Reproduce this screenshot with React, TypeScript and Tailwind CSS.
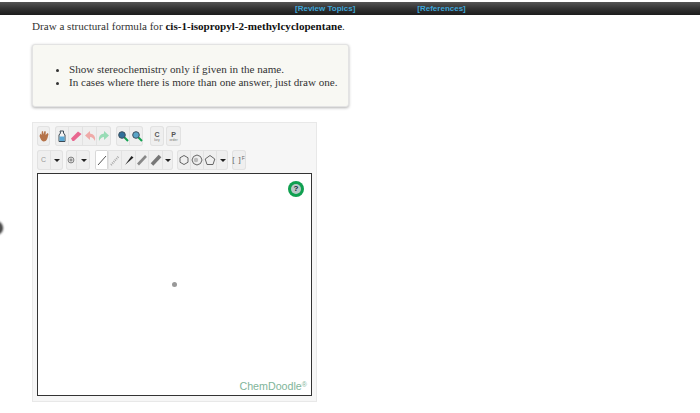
import React from "react";

const Seg = ({ w, active, children }: { w: string; active?: boolean; children?: React.ReactNode }) => (
  <div className={`${w} h-full flex items-center justify-center border-r border-[#e2e2e2] last:border-r-0 ${active ? "bg-white rounded-[2px] shadow-[inset_0_0_0_1px_#d8d8d8]" : ""}`}>
    {children}
  </div>
);

const Group = ({ className, children }: { className?: string; children: React.ReactNode }) => (
  <div className={`flex h-[20px] rounded-[3px] shadow-[inset_0_0_0_1px_#e2e2e2] bg-[#efefef] ${className ?? ""}`}>{children}</div>
);

const Caret = () => <div className="w-0 h-0 border-x-[3px] border-x-transparent border-t-[3px] border-t-[#222]" />;

const Icon = ({ children }: { children: React.ReactNode }) => (
  <svg width="12" height="12" viewBox="0 0 12 12">{children}</svg>
);

const Lens = ({ color }: { color: string }) => (
  <Icon>
    <line x1="7" y1="7" x2="11" y2="11" stroke="#12a150" strokeWidth="2" />
    <circle cx="5" cy="5" r="3.3" fill={color} stroke="#3d5060" strokeWidth="1" />
  </Icon>
);

const Label = ({ t, s }: { t: string; s: string }) => (
  <div className="flex flex-col items-center leading-none">
    <span className="text-[7px] font-bold text-[#555] leading-[7px]">{t}</span>
    <span className="text-[3.5px] text-[#777] leading-[4px]">{s}</span>
  </div>
);

export default function App() {
  return (
    <div className="relative w-[700px] h-[413px] bg-white overflow-hidden font-['Liberation_Serif',serif]">
      <div className="mt-[2px] h-[13px] pt-[1px] bg-gradient-to-b from-[#555] via-[#333] to-[#1c1c1c] flex items-center font-['Liberation_Sans',sans-serif] text-[8px] font-bold text-[#3ea6d8]">
        <span className="ml-[295px]">[Review Topics]</span>
        <span className="ml-[62px]">[References]</span>
      </div>

      <div className="ml-[32px]">
        <p className="mt-[4px] text-[11.1px] leading-[14px] text-[#333]">
          Draw a structural formula for <b className="text-[#111]">cis-1-isopropyl-2-methylcyclopentane</b>.
        </p>

        <div className="mt-[11px] w-[317px] h-[63px] rounded-[3px] border border-[#e3e3e3] bg-[#f8f8f3] shadow-[0_1px_3px_rgba(0,0,0,0.3)] flex items-center">
          <ul className="list-disc pl-[36px] text-[11.1px] leading-[13px] text-[#333]">
            <li>Show stereochemistry only if given in the name.</li>
            <li>In cases where there is more than one answer, just draw one.</li>
          </ul>
        </div>

        <div className="mt-[15px] w-[285px] h-[280px] border border-[#e8e8e8] bg-[#f6f6f6] pl-[4px] pt-[3px] font-['Liberation_Sans',sans-serif]">
          <div className="flex">
            <Group>
              <Seg w="w-[13px]">
                <Icon><path d="M1.5 6 L2.5 3.5 L3.5 5 L3.8 1.5 L5 1 L5.5 4.5 L6.5 1 L7.8 1.5 L7.6 5 L9.5 3 L10.5 4 L9.5 8 Q8.5 11.5 5.5 11.5 Q3 11 1.5 6Z" fill="#b5734a" /></Icon>
              </Seg>
            </Group>
            <Group className="ml-[5px]">
              <Seg w="w-[14px]">
                <Icon><path d="M4 1 H7.5 V3 L9 5 V11.5 H3 V5 L4.5 3Z" fill="#f2f2f2" stroke="#3c4a55" strokeWidth="1" /><rect x="3.5" y="6.5" width="5" height="4.5" fill="#5aa9d6" /></Icon>
              </Seg>
              <Seg w="w-[14px]">
                <Icon><path d="M1 8.5 L8 1.5 L11.5 4 L4 11 H2.5Z" fill="#e8668f" /></Icon>
              </Seg>
              <Seg w="w-[14px]">
                <Icon><path d="M1 5.5 L6 1 V3.5 Q12 4 11 11 Q9 7 6 7 V10Z" fill="#efaaa8" /></Icon>
              </Seg>
              <Seg w="w-[14px]">
                <Icon><path d="M11 5.5 L6 1 V3.5 Q0 4 1 11 Q3 7 6 7 V10Z" fill="#98dcb6" /></Icon>
              </Seg>
            </Group>
            <Group className="ml-[5px]">
              <Seg w="w-[14px]"><Lens color="#2f6f9a" /></Seg>
              <Seg w="w-[13px]"><Lens color="#5aa5c8" /></Seg>
            </Group>
            <Group className="ml-[7px]">
              <Seg w="w-[14px]"><Label t="C" s="key" /></Seg>
            </Group>
            <Group className="ml-[2px]">
              <Seg w="w-[15px]"><Label t="P" s="order" /></Seg>
            </Group>
          </div>

          <div className="flex mt-[4px]">
            <Group>
              <Seg w="w-[14px]"><span className="text-[7px] text-[#999]">C</span></Seg>
              <Seg w="w-[12px]"><Caret /></Seg>
            </Group>
            <Group className="ml-[3px]">
              <Seg w="w-[11px]">
                <Icon><circle cx="6" cy="6" r="3.5" fill="none" stroke="#666" strokeWidth="1" /><path d="M4 6 H8 M6 4 V8" stroke="#666" strokeWidth="1" /></Icon>
              </Seg>
              <Seg w="w-[13px]"><Caret /></Seg>
            </Group>
            <Group className="ml-[5px]">
              <Seg w="w-[14px]" active>
                <Icon><line x1="2" y1="11" x2="10" y2="2" stroke="#555" strokeWidth="1" /></Icon>
              </Seg>
              <Seg w="w-[13px]">
                <Icon><line x1="2" y1="11" x2="10" y2="2" stroke="#aaa" strokeWidth="2" strokeDasharray="1 1" /></Icon>
              </Seg>
              <Seg w="w-[14px]">
                <Icon><path d="M2 11 L8.5 2 L10.5 3.5Z" fill="#222" /></Icon>
              </Seg>
              <Seg w="w-[13px]">
                <Icon><path d="M2 10.5 L10 2" stroke="#888" strokeWidth="2.6" /></Icon>
              </Seg>
              <Seg w="w-[14px]">
                <Icon><path d="M2 10.5 L10 2" stroke="#777" strokeWidth="3.6" /></Icon>
              </Seg>
              <Seg w="w-[10px]"><Caret /></Seg>
            </Group>
            <Group className="ml-[4px]">
              <Seg w="w-[14px]">
                <Icon><path d="M6 1.5 L10 3.75 V8.25 L6 10.5 L2 8.25 V3.75Z" fill="none" stroke="#666" strokeWidth="1" /></Icon>
              </Seg>
              <Seg w="w-[13px]">
                <Icon><path d="M6 1 L9.5 2.5 L11 6 L9.5 9.5 L6 11 L2.5 9.5 L1 6 L2.5 2.5Z" fill="none" stroke="#666" strokeWidth="1" /><circle cx="5" cy="6" r="2.2" fill="#bbb" /></Icon>
              </Seg>
              <Seg w="w-[13px]">
                <Icon><path d="M6 1.5 L10.8 5 L9 10.5 H3 L1.2 5Z" fill="none" stroke="#666" strokeWidth="1" /></Icon>
              </Seg>
              <Seg w="w-[11px]"><Caret /></Seg>
            </Group>
            <Group className="ml-[4px]">
              <Seg w="w-[14px]"><span className="text-[8px] text-[#666] tracking-[1px] whitespace-nowrap">[ ]<sup className="text-[5px]">F</sup></span></Seg>
            </Group>
          </div>

          <div className="relative mt-[3px] w-[275px] h-[223px] bg-white border border-[#333]">
            <div className="absolute left-[250px] top-[7px] w-[16px] h-[16px] rounded-full bg-[#10a050] flex items-center justify-center">
              <div className="w-[10px] h-[10px] rounded-full bg-[#b8c8c8] flex items-center justify-center text-[8px] font-bold leading-none text-[#123]">?</div>
            </div>
            <div className="absolute left-[134px] top-[108px] w-[5px] h-[5px] rounded-full bg-[#999]" />
            <div className="absolute right-[4px] bottom-[2px] text-[10.7px] text-[#7fb59a] leading-[14px]">
              ChemDoodle<sup className="text-[7px]">®</sup>
            </div>
          </div>
        </div>
      </div>

      <div className="absolute left-[-12px] top-[221px] w-[15px] h-[14px] rounded-full bg-[#888] border-[3px] border-[#333] blur-[1px]" />
    </div>
  );
}
